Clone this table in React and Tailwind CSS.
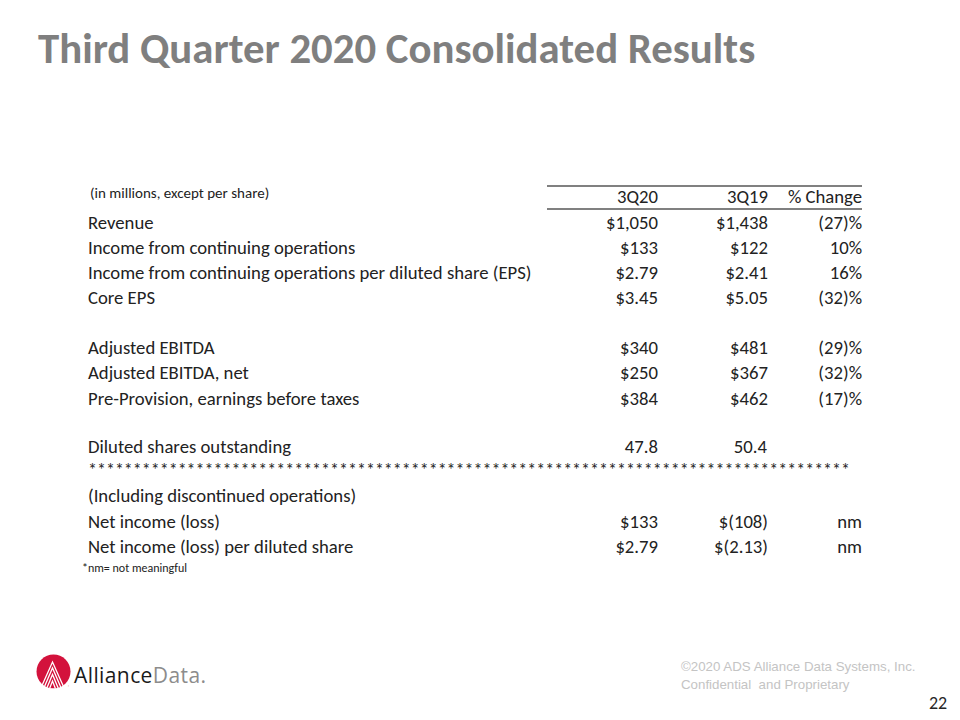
import React from "react";

const FONT = { fontFamily: "Carlito, Calibri, Lato, sans-serif" };

function Row({ label, a, b, c, h = "h-[25px]" }) {
  return (
    <div className={`grid grid-cols-[459px_113px_108px_94px] items-center ${h}`}>
      <div className="whitespace-nowrap">{label}</div>
      <div className="text-right pr-[2px]">{a}</div>
      <div className="text-right">{b}</div>
      <div className="text-right">{c}</div>
    </div>
  );
}

function Logo() {
  return (
    <svg width="38" height="38" viewBox="0 0 38 38">
      <defs>
        <clipPath id="cut">
          <rect x="0" y="0" width="38" height="34.5" />
        </clipPath>
      </defs>
      <g clipPath="url(#cut)">
        <circle cx="18.5" cy="17.5" r="17" fill="#d3123c" />
        <g stroke="#ffffff" strokeWidth="1.3" fill="none" strokeLinecap="butt">
          <polyline points="5,36 17.5,8 30,36" />
          <polyline points="8,36 17.5,14 27,36" />
          <polyline points="11,36 17.5,20.5 24,36" />
          <polyline points="14,36 17.5,27 21,36" />
        </g>
      </g>
      <text x="33" y="34" fontSize="3" fill="#d3123c">®</text>
    </svg>
  );
}

export default function App() {
  return (
    <div className="relative w-[960px] h-[720px] bg-white overflow-hidden text-[#222222]" style={FONT}>
      <div className="pl-[38px] pt-[23px] h-[80px]">
        <h1 className="text-[42.8px] font-bold text-[#7f7f7f] leading-[50px]">
          Third Quarter 2020 Consolidated Results
        </h1>
      </div>

      <div className="pl-[88px] pt-[105px] text-[18.7px] leading-[22px]">
        <div className="grid grid-cols-[459px_315px] h-[25px]">
          <div className="text-[15px] pl-[2px] pt-[0px] leading-[16px]">(in millions, except per share)</div>
          <div className="grid grid-cols-[113px_108px_94px] items-center border-t-2 border-b-2 border-[#808080] leading-none">
            <div className="text-right pr-[2px]">3Q20</div>
            <div className="text-right">3Q19</div>
            <div className="text-right">% Change</div>
          </div>
        </div>
        <Row label="Revenue" a="$1,050" b="$1,438" c="(27)%" />
        <Row label="Income from continuing operations" a="$133" b="$122" c="10%" />
        <Row label="Income from continuing operations per diluted share (EPS)" a="$2.79" b="$2.41" c="16%" />
        <Row label="Core EPS" a="$3.45" b="$5.05" c="(32)%" />
        <div className="h-[25px]" />
        <Row label="Adjusted EBITDA" a="$340" b="$481" c="(29)%" />
        <Row label="Adjusted EBITDA, net" a="$250" b="$367" c="(32)%" />
        <Row label="Pre-Provision, earnings before taxes" a="$384" b="$462" c="(17)%" h="h-[28px]" />
        <div className="h-[22px]" />
        <Row label="Diluted shares outstanding" a="47.8" b={<span className="pr-[1px]">50.4</span>} c="" h="h-[23px]" />
        <div className="h-[24px] flex items-center whitespace-nowrap overflow-hidden w-[770px] text-[18px]">
          {"*".repeat(85)}
        </div>
        <Row label="(Including discontinued operations)" a="" b="" c="" h="h-[27px]" />
        <Row label="Net income (loss)" a="$133" b="$(108)" c="nm" />
        <Row label="Net income (loss) per diluted share" a="$2.79" b="$(2.13)" c="nm" />
        <div className="h-[18px] flex items-center text-[12px] -ml-[6px]">*nm= not meaningful</div>
      </div>

      <div className="absolute left-[35px] top-[654px] flex items-center">
        <Logo />
        <div
          className="ml-[1px] text-[21px] tracking-[0.4px] leading-none pt-[4px]"
          style={{ fontFamily: "'Open Sans', 'Noto Sans', sans-serif" }}
        >
          <span className="text-[#1a1a1a]">Alliance</span>
          <span className="text-[#8c8c8c]">Data.</span>
        </div>
      </div>

      <div
        className="absolute left-[681px] top-[658px] text-[13.3px] leading-[18px] text-[#c4c4c4]"
        style={{ fontFamily: "'Liberation Sans', Arial, sans-serif" }}
      >
        <div>©2020 ADS Alliance Data Systems, Inc.</div>
        <div>Confidential&nbsp; and Proprietary</div>
      </div>

      <div className="absolute left-[929px] top-[694px] text-[18px] leading-none text-[#262626]">22</div>
    </div>
  );
}
